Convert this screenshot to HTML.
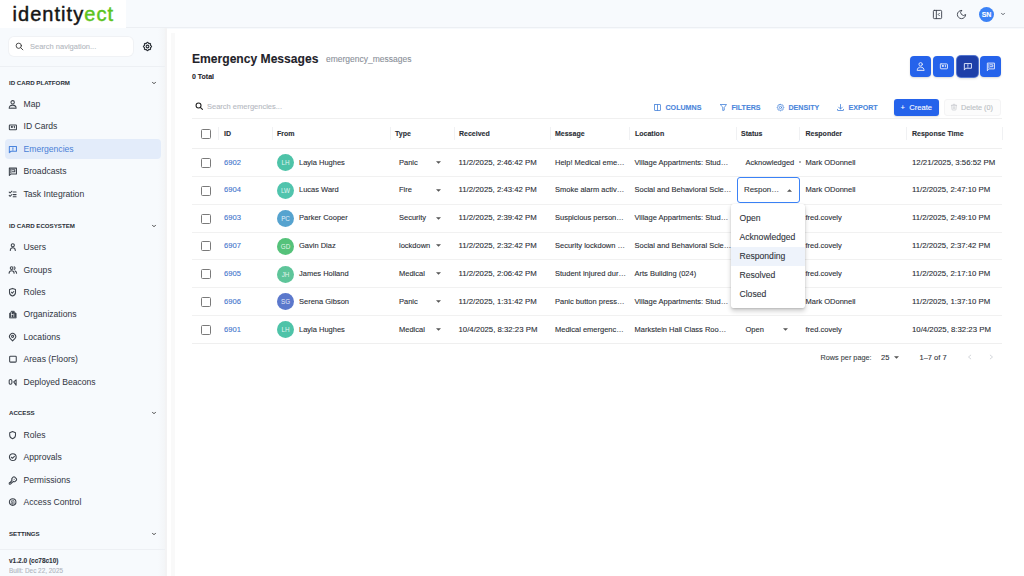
<!DOCTYPE html>
<html><head><meta charset="utf-8">
<style>
*{box-sizing:border-box;margin:0;padding:0}
html,body{width:1024px;height:576px;overflow:hidden;background:#f7fafd;font-family:"Liberation Sans",sans-serif;color:#2b2f36}
.abs{position:absolute;-webkit-text-stroke:0.1px currentColor}
svg{display:block}
#hdr{position:absolute;left:0;top:0;width:1024px;height:28px;background:#f7fafd;border-bottom:1px solid #eceff3}
#logo{position:absolute;left:0;top:0;width:126px;height:28px;background:#fff}
#side{position:absolute;left:0;top:28px;width:167px;height:548px;background:linear-gradient(90deg,#f7fafd 0,#f7fafd 158px,#f3f5f7 165px);border-right:2px solid #f3f3f4}
#main{position:absolute;left:167px;top:29px;width:857px;height:547px;background:#fff}
.nav{position:absolute;left:23.5px;font-size:8.6px;color:#3b414b;white-space:nowrap;line-height:10px}
.sec{position:absolute;left:9px;font-size:6.15px;font-weight:bold;color:#2a2f37;letter-spacing:0px;white-space:nowrap;line-height:8px}
</style></head><body>
<div id="hdr"></div>
<div id="logo"></div>
<div id="side"></div>
<div id="main"></div>
<div class="abs" style="left:171px;top:33px;width:4px;height:543px;background:#f9f9f9"></div>
<div class="abs" style="left:9px;top:37px;width:124px;height:19px;background:#fff;border-radius:5px;box-shadow:0 0 0 1px #f0f2f5"></div>
<div class="abs" style="left:14.5px;top:42px;width:9px;height:9px;color:#333"><svg width="9" height="9" viewBox="0 0 24 24" stroke="currentColor" fill="none" stroke-width="2.3" stroke-linecap="round" stroke-linejoin="round"><circle cx="10" cy="10" r="7"/><path d="M21 21l-6-6"/></svg></div>
<div class="abs" style="left:30px;top:42px;font-size:7.5px;color:#b3b8c0;line-height:9px;white-space:nowrap">Search navigation...</div>
<div class="abs" style="left:142px;top:41px;width:11px;height:11px;color:#2a2f36"><svg width="11" height="11" viewBox="0 0 24 24" stroke="currentColor" fill="none" stroke-width="2.4" stroke-linecap="round" stroke-linejoin="round"><path d="M10.325 4.317c.426 -1.756 2.924 -1.756 3.35 0a1.724 1.724 0 0 0 2.573 1.066c1.543 -.94 3.31 .826 2.37 2.37a1.724 1.724 0 0 0 1.065 2.572c1.756 .426 1.756 2.924 0 3.35a1.724 1.724 0 0 0 -1.066 2.573c.94 1.543 -.826 3.31 -2.37 2.37a1.724 1.724 0 0 0 -2.572 1.065c-.426 1.756 -2.924 1.756 -3.35 0a1.724 1.724 0 0 0 -2.573 -1.066c-1.543 .94 -3.31 -.826 -2.37 -2.37a1.724 1.724 0 0 0 -1.065 -2.572c-1.756 -.426 -1.756 -2.924 0 -3.35a1.724 1.724 0 0 0 1.066 -2.573c-.94 -1.543 .826 -3.31 2.37 -2.37c1 .608 2.296 .07 2.572 -1.065z"/><circle cx="12" cy="12" r="3"/></svg></div>
<div class="abs" style="left:0;top:66px;width:165px;height:1px;background:#edf0f4"></div>
<div class="sec" style="top:79px">ID CARD PLATFORM</div><div class="abs" style="left:151px;top:80.2px;width:6px;height:6px;color:#333"><svg width="6" height="6" viewBox="0 0 24 24" stroke="currentColor" fill="none" stroke-width="3.6" stroke-linecap="round" stroke-linejoin="round"><path d="M6 9l6 6 6-6"/></svg></div>
<div class="abs" style="left:8px;top:99.20px;width:10px;height:10px;color:#3d434c"><svg width="10" height="10" viewBox="0 0 10 10" stroke="currentColor" fill="none" stroke-width="1.05" stroke-linecap="round" stroke-linejoin="round"><circle cx="4.65" cy="3.3" r="1.7"/><path d="M1.2 9.2c0-2 1.5-3.1 3.45-3.1s3.45 1.1 3.45 3.1z"/><path d="M3 8.2h3.3" stroke-width="0.6" opacity="0.5"/></svg></div><div class="nav" style="top:99.10px;color:#30353d">Map</div>
<div class="abs" style="left:8px;top:121.55px;width:10px;height:10px;color:#3d434c"><svg width="10" height="10" viewBox="0 0 10 10" stroke="currentColor" fill="none" stroke-width="1.05" stroke-linecap="round" stroke-linejoin="round"><rect x="1.35" y="2.9" width="7.1" height="4.9" rx="0.6"/><rect x="2.9" y="4.05" width="1.9" height="1.8" fill="currentColor" stroke="none"/><path d="M6.4 4.2v1.6"/></svg></div><div class="nav" style="top:121.45px;color:#30353d">ID Cards</div>
<div class="abs" style="left:5px;top:139px;width:156px;height:20px;background:#e3ecfa;border-radius:4px"></div>
<div class="abs" style="left:8px;top:143.90px;width:10px;height:10px;color:#4a84dd"><svg width="10" height="10" viewBox="0 0 10 10" stroke="currentColor" fill="none" stroke-width="1.05" stroke-linecap="round" stroke-linejoin="round"><path d="M1.35 8.7V2.55h7.1v4.7H3z"/><path d="M4.9 3.7v1.5"/><path d="M4.9 6.2v.05"/></svg></div><div class="nav" style="top:143.80px;color:#4a7fd6">Emergencies</div>
<div class="abs" style="left:8px;top:166.25px;width:10px;height:10px;color:#3d434c"><svg width="10" height="10" viewBox="0 0 10 10" stroke="currentColor" fill="none" stroke-width="1.05" stroke-linecap="round" stroke-linejoin="round"><path d="M1.35 9.4V2.1h7.1v5.8H3z"/><path d="M2.9 3.3v3.4"/><path d="M4.4 3.8h2.4v1.9H4.4"/></svg></div><div class="nav" style="top:166.15px;color:#30353d">Broadcasts</div>
<div class="abs" style="left:8px;top:188.60px;width:10px;height:10px;color:#3d434c"><svg width="10" height="10" viewBox="0 0 10 10" stroke="currentColor" fill="none" stroke-width="1.05" stroke-linecap="round" stroke-linejoin="round"><path d="M1.2 3.1l.9.9 1.8-1.8M1.2 6.4l.9.9 1.8-1.8"/><path d="M5.2 2.9h2.9M5.2 5.6h2.9M5.2 7.8h2.9"/></svg></div><div class="nav" style="top:188.50px;color:#30353d">Task Integration</div>
<div class="sec" style="top:222px">ID CARD ECOSYSTEM</div><div class="abs" style="left:151px;top:223.2px;width:6px;height:6px;color:#333"><svg width="6" height="6" viewBox="0 0 24 24" stroke="currentColor" fill="none" stroke-width="3.6" stroke-linecap="round" stroke-linejoin="round"><path d="M6 9l6 6 6-6"/></svg></div>
<div class="abs" style="left:8px;top:242.20px;width:10px;height:10px;color:#3d434c"><svg width="10" height="10" viewBox="0 0 10 10" stroke="currentColor" fill="none" stroke-width="1.05" stroke-linecap="round" stroke-linejoin="round"><circle cx="4.8" cy="3.3" r="1.55"/><path d="M2.3 8.4c0-1.6 1.1-2.7 2.5-2.7s2.5 1.1 2.5 2.7"/></svg></div><div class="nav" style="top:242.10px;color:#30353d">Users</div>
<div class="abs" style="left:8px;top:264.60px;width:10px;height:10px;color:#3d434c"><svg width="10" height="10" viewBox="0 0 10 10" stroke="currentColor" fill="none" stroke-width="1.05" stroke-linecap="round" stroke-linejoin="round"><circle cx="3.6" cy="3.1" r="1.35"/><path d="M1.1 8.2c0-1.5 1-2.5 2.5-2.5s2.5 1 2.5 2.5"/><path d="M6.1 1.8a1.35 1.35 0 0 1 0 2.6M7.1 5.9c.9.3 1.5 1.1 1.5 2.3"/></svg></div><div class="nav" style="top:264.50px;color:#30353d">Groups</div>
<div class="abs" style="left:8px;top:287.00px;width:10px;height:10px;color:#3d434c"><svg width="10" height="10" viewBox="0 0 10 10" stroke="currentColor" fill="none" stroke-width="1.05" stroke-linecap="round" stroke-linejoin="round"><path d="M4.5 1.4l3 1.1v3c0 1.9-1.3 3-3 3.5-1.7-.5-3-1.6-3-3.5v-3z"/><path d="M3.4 5.2l.9.9 1.5-1.6"/></svg></div><div class="nav" style="top:286.90px;color:#30353d">Roles</div>
<div class="abs" style="left:8px;top:309.40px;width:10px;height:10px;color:#3d434c"><svg width="10" height="10" viewBox="0 0 10 10" stroke="currentColor" fill="none" stroke-width="1.05" stroke-linecap="round" stroke-linejoin="round"><path d="M1.5 8.7V4.2l1.6-.9V2.2h3.2v1.1l1.9 1v4.4z" fill="currentColor" stroke-width="0.6"/><path d="M3.4 3.6v4.3M3.4 5.5h1.5M5.8 5v2.5" stroke="#f6f9fc" stroke-width="0.7"/></svg></div><div class="nav" style="top:309.30px;color:#30353d">Organizations</div>
<div class="abs" style="left:8px;top:331.80px;width:10px;height:10px;color:#3d434c"><svg width="10" height="10" viewBox="0 0 10 10" stroke="currentColor" fill="none" stroke-width="1.05" stroke-linecap="round" stroke-linejoin="round"><circle cx="4.6" cy="4.3" r="1.05"/><path d="M4.6 8.9L2.4 6.6a3.05 3.05 0 1 1 4.4 0z"/></svg></div><div class="nav" style="top:331.70px;color:#30353d">Locations</div>
<div class="abs" style="left:8px;top:354.20px;width:10px;height:10px;color:#3d434c"><svg width="10" height="10" viewBox="0 0 10 10" stroke="currentColor" fill="none" stroke-width="1.05" stroke-linecap="round" stroke-linejoin="round"><rect x="1.65" y="2.2" width="6.6" height="5.9" rx="0.8"/></svg></div><div class="nav" style="top:354.10px;color:#30353d">Areas (Floors)</div>
<div class="abs" style="left:8px;top:376.60px;width:10px;height:10px;color:#3d434c"><svg width="10" height="10" viewBox="0 0 10 10" stroke="currentColor" fill="none" stroke-width="1.05" stroke-linecap="round" stroke-linejoin="round"><rect x="1.2" y="2.4" width="2.7" height="4.9" rx="1.3"/><path d="M5.7 4.9l2.4-2v5.4z"/></svg></div><div class="nav" style="top:376.50px;color:#30353d">Deployed Beacons</div>
<div class="sec" style="top:409px">ACCESS</div><div class="abs" style="left:151px;top:410.2px;width:6px;height:6px;color:#333"><svg width="6" height="6" viewBox="0 0 24 24" stroke="currentColor" fill="none" stroke-width="3.6" stroke-linecap="round" stroke-linejoin="round"><path d="M6 9l6 6 6-6"/></svg></div>
<div class="abs" style="left:8px;top:430.05px;width:10px;height:10px;color:#3d434c"><svg width="10" height="10" viewBox="0 0 10 10" stroke="currentColor" fill="none" stroke-width="1.05" stroke-linecap="round" stroke-linejoin="round"><path d="M4.6 1.5l2.9 1.2v2.6c0 1.8-1.2 2.9-2.9 3.4-1.7-.5-2.9-1.6-2.9-3.4V2.7z"/></svg></div><div class="nav" style="top:429.95px;color:#30353d">Roles</div>
<div class="abs" style="left:8px;top:452.40px;width:10px;height:10px;color:#3d434c"><svg width="10" height="10" viewBox="0 0 10 10" stroke="currentColor" fill="none" stroke-width="1.05" stroke-linecap="round" stroke-linejoin="round"><circle cx="4.8" cy="5.1" r="3.4"/><path d="M3.3 5.2l1.1 1.1 2-2"/></svg></div><div class="nav" style="top:452.30px;color:#30353d">Approvals</div>
<div class="abs" style="left:8px;top:474.75px;width:10px;height:10px;color:#3d434c"><svg width="10" height="10" viewBox="0 0 10 10" stroke="currentColor" fill="none" stroke-width="1.05" stroke-linecap="round" stroke-linejoin="round"><g transform="translate(0 0.6) scale(0.41)" stroke-width="2.6"><path d="M16.555 3.843l3.602 3.602a2.877 2.877 0 0 1 0 4.069l-2.643 2.643a2.877 2.877 0 0 1-4.069 0l-.301-.301l-6.558 6.558a2 2 0 0 1-1.239.578l-.175.008h-1.172a1 1 0 0 1-1-1v-1.172a2 2 0 0 1 .586-1.414l.414-.414h2v-2h2v-2l2.144-2.144l-.301-.301a2.877 2.877 0 0 1 0-4.069l2.643-2.643a2.877 2.877 0 0 1 4.069 0z"/><path d="M15 9h.01"/></g></svg></div><div class="nav" style="top:474.65px;color:#30353d">Permissions</div>
<div class="abs" style="left:8px;top:497.10px;width:10px;height:10px;color:#3d434c"><svg width="10" height="10" viewBox="0 0 10 10" stroke="currentColor" fill="none" stroke-width="1.05" stroke-linecap="round" stroke-linejoin="round"><circle cx="4.65" cy="5.05" r="3.3"/><path d="M3.3 4.6a1.35 1.35 0 0 1 2.7 0v2.1M3.3 5.6v1.2M4.65 4.7v2.6" stroke-width="0.75"/></svg></div><div class="nav" style="top:497.00px;color:#30353d">Access Control</div>
<div class="sec" style="top:530px">SETTINGS</div><div class="abs" style="left:151px;top:531.2px;width:6px;height:6px;color:#333"><svg width="6" height="6" viewBox="0 0 24 24" stroke="currentColor" fill="none" stroke-width="3.6" stroke-linecap="round" stroke-linejoin="round"><path d="M6 9l6 6 6-6"/></svg></div>
<div class="abs" style="left:0;top:549px;width:165px;height:1px;background:#edf0f4"></div>
<div class="abs" style="left:9px;top:557px;font-size:6.5px;font-weight:bold;color:#2f343c;white-space:nowrap;line-height:8px">v1.2.0 (cc78c10)</div>
<div class="abs" style="left:9px;top:567px;font-size:6.4px;color:#b0b5bd;white-space:nowrap;line-height:8px">Built: Dec 22, 2025</div>
<div class="abs" style="left:932px;top:9px;width:11px;height:11px;color:#3b414b"><svg width="11" height="11" viewBox="0 0 24 24" stroke="currentColor" fill="none" stroke-width="2" stroke-linecap="round" stroke-linejoin="round"><rect x="3" y="3" width="18" height="18" rx="2"/><path d="M9.5 3v18"/><path d="M16 9.5l-2.5 2.5 2.5 2.5"/></svg></div>
<div class="abs" style="left:955.5px;top:9px;width:11px;height:11px;color:#3b414b"><svg width="11" height="11" viewBox="0 0 24 24" stroke="currentColor" fill="none" stroke-width="2" stroke-linecap="round" stroke-linejoin="round"><path d="M12 3a6 6 0 0 0 9 9 9 9 0 1 1-9-9z"/></svg></div>
<div class="abs" style="left:979px;top:7px;width:15px;height:15px;border-radius:50%;background:#3b82f6;color:#fff;font-size:7px;font-weight:bold;text-align:center;line-height:15px;letter-spacing:-0.2px">SN</div>
<div class="abs" style="left:999.5px;top:10.5px;width:6px;height:6px;color:#3b414b"><svg width="6" height="6" viewBox="0 0 24 24" stroke="currentColor" fill="none" stroke-width="3.2" stroke-linecap="round" stroke-linejoin="round"><path d="M6 9l6 6 6-6"/></svg></div>
<div class="abs" style="left:12.5px;top:1.5px;font-size:20px;line-height:24px;letter-spacing:1.05px;white-space:nowrap;color:#151515;-webkit-text-stroke:0.45px currentColor"><span>identity</span><span style="color:#5cc41c">ect</span></div>
<div class="abs" style="left:192px;top:51px;font-size:12.1px;font-weight:bold;color:#1f232a;line-height:16px;white-space:nowrap">Emergency Messages</div>
<div class="abs" style="left:326px;top:53.7px;font-size:8.5px;color:#8a9099;line-height:10px;white-space:nowrap">emergency_messages</div>
<div class="abs" style="left:192px;top:72px;font-size:7px;font-weight:bold;color:#1f232a;line-height:9px;white-space:nowrap">0 Total</div>
<div class="abs" style="left:910px;top:55.5px;width:21px;height:21px;border-radius:4px;background:#2563eb;box-shadow:0 1px 2px rgba(0,0,0,.15);color:#dfe7fb;padding:5.5px 5.5px 5.5px 6px"><svg width="10" height="10" viewBox="0 0 10 10" stroke="currentColor" fill="none" stroke-width="0.95" stroke-linecap="round" stroke-linejoin="round"><circle cx="4.65" cy="3.3" r="1.7"/><path d="M1.2 9.2c0-2 1.5-3.1 3.45-3.1s3.45 1.1 3.45 3.1z"/><path d="M3 8.2h3.3" stroke-width="0.6" opacity="0.5"/></svg></div>
<div class="abs" style="left:933px;top:55.5px;width:21px;height:21px;border-radius:4px;background:#2563eb;box-shadow:0 1px 2px rgba(0,0,0,.15);color:#dfe7fb;padding:5.5px 5.5px 5.5px 6px"><svg width="10" height="10" viewBox="0 0 10 10" stroke="currentColor" fill="none" stroke-width="0.95" stroke-linecap="round" stroke-linejoin="round"><rect x="1.35" y="2.9" width="7.1" height="4.9" rx="0.6"/><rect x="2.9" y="4.05" width="1.9" height="1.8" fill="currentColor" stroke="none"/><path d="M6.4 4.2v1.6"/></svg></div>
<div class="abs" style="left:957px;top:55.5px;width:21px;height:21px;border-radius:4px;background:#1e3fa8;box-shadow:0 0 0 1px #5577d0,0 1px 3px rgba(0,0,0,.25);color:#dfe7fb;padding:5.5px 5.5px 5.5px 6px"><svg width="10" height="10" viewBox="0 0 10 10" stroke="currentColor" fill="none" stroke-width="0.95" stroke-linecap="round" stroke-linejoin="round"><path d="M1.35 8.7V2.55h7.1v4.7H3z"/><path d="M4.9 3.7v1.5"/><path d="M4.9 6.2v.05"/></svg></div>
<div class="abs" style="left:980px;top:55.5px;width:21px;height:21px;border-radius:4px;background:#2563eb;box-shadow:0 1px 2px rgba(0,0,0,.15);color:#dfe7fb;padding:5.5px 5.5px 5.5px 6px"><svg width="10" height="10" viewBox="0 0 10 10" stroke="currentColor" fill="none" stroke-width="0.95" stroke-linecap="round" stroke-linejoin="round"><path d="M1.35 9.4V2.1h7.1v5.8H3z"/><path d="M2.9 3.3v3.4"/><path d="M4.4 3.8h2.4v1.9H4.4"/></svg></div>
<div class="abs" style="left:195px;top:102px;width:8.5px;height:8.5px;color:#222"><svg width="8.5" height="8.5" viewBox="0 0 24 24" stroke="currentColor" fill="none" stroke-width="3" stroke-linecap="round" stroke-linejoin="round"><circle cx="10" cy="10" r="7"/><path d="M21 21l-6-6"/></svg></div>
<div class="abs" style="left:207px;top:101.6px;font-size:7.5px;color:#b5b9bf;line-height:9px;white-space:nowrap">Search emergencies...</div>
<div class="abs" style="left:192px;top:118px;width:810px;height:1px;background:#f0f0f0"></div>
<div class="abs" style="left:653px;top:103px;width:9px;height:9px;color:#4a86db"><svg width="9" height="9" viewBox="0 0 24 24" stroke="currentColor" fill="none" stroke-width="2.2" stroke-linecap="round" stroke-linejoin="round"><rect x="4" y="4" width="16" height="16" rx="1"/><path d="M12 4v16"/></svg></div>
<div class="abs" style="left:665.5px;top:104px;font-size:7.1px;font-weight:bold;color:#4a86db;line-height:9px;white-space:nowrap">COLUMNS</div>
<div class="abs" style="left:719px;top:103px;width:9px;height:9px;color:#4a86db"><svg width="9" height="9" viewBox="0 0 24 24" stroke="currentColor" fill="none" stroke-width="2.2" stroke-linecap="round" stroke-linejoin="round"><path d="M4 4h16l-6 8v7l-4 1v-8z"/></svg></div>
<div class="abs" style="left:731.5px;top:104px;font-size:7.1px;font-weight:bold;color:#4a86db;line-height:9px;white-space:nowrap">FILTERS</div>
<div class="abs" style="left:776px;top:103px;width:9px;height:9px;color:#4a86db"><svg width="9" height="9" viewBox="0 0 24 24" stroke="currentColor" fill="none" stroke-width="2.2" stroke-linecap="round" stroke-linejoin="round"><path d="M10.325 4.317c.426 -1.756 2.924 -1.756 3.35 0a1.724 1.724 0 0 0 2.573 1.066c1.543 -.94 3.31 .826 2.37 2.37a1.724 1.724 0 0 0 1.065 2.572c1.756 .426 1.756 2.924 0 3.35a1.724 1.724 0 0 0 -1.066 2.573c.94 1.543 -.826 3.31 -2.37 2.37a1.724 1.724 0 0 0 -2.572 1.065c-.426 1.756 -2.924 1.756 -3.35 0a1.724 1.724 0 0 0 -2.573 -1.066c-1.543 .94 -3.31 -.826 -2.37 -2.37a1.724 1.724 0 0 0 -1.065 -2.572c-1.756 -.426 -1.756 -2.924 0 -3.35a1.724 1.724 0 0 0 1.066 -2.573c-.94 -1.543 .826 -3.31 2.37 -2.37c1 .608 2.296 .07 2.572 -1.065z"/><circle cx="12" cy="12" r="3"/></svg></div>
<div class="abs" style="left:788.5px;top:104px;font-size:7.1px;font-weight:bold;color:#4a86db;line-height:9px;white-space:nowrap">DENSITY</div>
<div class="abs" style="left:836px;top:103px;width:9px;height:9px;color:#4a86db"><svg width="9" height="9" viewBox="0 0 24 24" stroke="currentColor" fill="none" stroke-width="2.2" stroke-linecap="round" stroke-linejoin="round"><path d="M4 17v2a1 1 0 0 0 1 1h14a1 1 0 0 0 1-1v-2"/><path d="M7 11l5 5 5-5"/><path d="M12 4v12"/></svg></div>
<div class="abs" style="left:848.5px;top:104px;font-size:7.1px;font-weight:bold;color:#4a86db;line-height:9px;white-space:nowrap">EXPORT</div>
<div class="abs" style="left:893.5px;top:99.3px;width:45.5px;height:16.7px;border-radius:3px;background:#2563eb;color:#fff;font-size:7.6px;line-height:17px;text-align:center;white-space:nowrap;box-shadow:0 1px 2px rgba(0,0,0,.12)">+&nbsp; Create</div>
<div class="abs" style="left:944px;top:99px;width:57px;height:17px;border-radius:3px;background:#fcfcfc;border:1px solid #f4f4f5;color:#b9bdc3;font-size:7.3px;line-height:15px;white-space:nowrap;padding-left:16px">Delete (0)</div>
<div class="abs" style="left:950px;top:103px;width:8px;height:8px;color:#c4c7cc"><svg width="8" height="8" viewBox="0 0 24 24" stroke="currentColor" fill="none" stroke-width="2" stroke-linecap="round" stroke-linejoin="round"><path d="M4 7h16M10 11v6M14 11v6M5 7l1 12a2 2 0 0 0 2 2h8a2 2 0 0 0 2-2l1-12M9 7V4h6v3"/></svg></div>
<div class="abs" style="left:200.5px;top:128.5px;width:10px;height:10px;border:1.5px solid #7a7a7a;border-radius:1.5px"></div>
<div class="abs" style="left:224px;top:129px;font-size:7px;font-weight:bold;color:#2a2e35;line-height:9px;white-space:nowrap">ID</div>
<div class="abs" style="left:277px;top:129px;font-size:7px;font-weight:bold;color:#2a2e35;line-height:9px;white-space:nowrap">From</div>
<div class="abs" style="left:395px;top:129px;font-size:7px;font-weight:bold;color:#2a2e35;line-height:9px;white-space:nowrap">Type</div>
<div class="abs" style="left:459px;top:129px;font-size:7px;font-weight:bold;color:#2a2e35;line-height:9px;white-space:nowrap">Received</div>
<div class="abs" style="left:555px;top:129px;font-size:7px;font-weight:bold;color:#2a2e35;line-height:9px;white-space:nowrap">Message</div>
<div class="abs" style="left:635px;top:129px;font-size:7px;font-weight:bold;color:#2a2e35;line-height:9px;white-space:nowrap">Location</div>
<div class="abs" style="left:741px;top:129px;font-size:7px;font-weight:bold;color:#2a2e35;line-height:9px;white-space:nowrap">Status</div>
<div class="abs" style="left:805.5px;top:129px;font-size:7px;font-weight:bold;color:#2a2e35;line-height:9px;white-space:nowrap">Responder</div>
<div class="abs" style="left:912px;top:129px;font-size:7px;font-weight:bold;color:#2a2e35;line-height:9px;white-space:nowrap">Response Time</div>
<div class="abs" style="left:218px;top:127px;width:1px;height:13px;background:#f0f1f3"></div>
<div class="abs" style="left:272px;top:127px;width:1px;height:13px;background:#f0f1f3"></div>
<div class="abs" style="left:389.5px;top:127px;width:1px;height:13px;background:#f0f1f3"></div>
<div class="abs" style="left:453.5px;top:127px;width:1px;height:13px;background:#f0f1f3"></div>
<div class="abs" style="left:549.5px;top:127px;width:1px;height:13px;background:#f0f1f3"></div>
<div class="abs" style="left:629px;top:127px;width:1px;height:13px;background:#f0f1f3"></div>
<div class="abs" style="left:736px;top:127px;width:1px;height:13px;background:#f0f1f3"></div>
<div class="abs" style="left:799px;top:127px;width:1px;height:13px;background:#f0f1f3"></div>
<div class="abs" style="left:906px;top:127px;width:1px;height:13px;background:#f0f1f3"></div>
<div class="abs" style="left:1002px;top:127px;width:1px;height:13px;background:#f0f1f3"></div>
<div class="abs" style="left:192px;top:147.7px;width:810px;height:1px;background:#efefef"></div>
<div class="abs" style="left:200.5px;top:157.75px;width:10px;height:10px;border:1.5px solid #7a7a7a;border-radius:1.5px"></div>
<div class="abs" style="left:224px;top:157.55px;font-size:7.6px;color:#3f74cc;line-height:10px;white-space:nowrap;">6902</div>
<div class="abs" style="left:277px;top:153.95px;width:17px;height:17px;border-radius:50%;background:#4ec3a8;color:rgba(255,255,255,.85);font-size:6.3px;text-align:center;line-height:18px;-webkit-text-stroke:0">LH</div>
<div class="abs" style="left:299px;top:157.55px;font-size:7.5px;color:#2a2e35;line-height:10px;white-space:nowrap;">Layla Hughes</div>
<div class="abs" style="left:399px;top:157.55px;font-size:7.5px;color:#2a2e35;line-height:10px;white-space:nowrap;">Panic</div>
<div class="abs" style="left:436px;top:160.75px"><svg width="5" height="3" viewBox="0 0 10 5"><path d="M0 0h10L5 5z" fill="#555"/></svg></div>
<div class="abs" style="left:458.5px;top:157.55px;font-size:7.8px;color:#2a2e35;line-height:10px;white-space:nowrap;">11/2/2025, 2:46:42 PM</div>
<div class="abs" style="left:555px;top:157.55px;font-size:7.5px;color:#2a2e35;line-height:10px;white-space:nowrap;">Help! Medical eme…</div>
<div class="abs" style="left:634.5px;top:157.55px;font-size:7.5px;color:#2a2e35;line-height:10px;white-space:nowrap;">Village Appartments: Stud…</div>
<div class="abs" style="left:745.5px;top:157.55px;font-size:7.5px;color:#2a2e35;line-height:10px;white-space:nowrap;">Acknowledged</div>
<div class="abs" style="left:805.5px;top:157.55px;font-size:7.5px;color:#2a2e35;line-height:10px;white-space:nowrap;">Mark ODonnell</div>
<div class="abs" style="left:912px;top:157.55px;font-size:7.8px;color:#2a2e35;line-height:10px;white-space:nowrap;">12/21/2025, 3:56:52 PM</div>
<div class="abs" style="left:192px;top:175.70px;width:810px;height:1px;background:#f1f1f1"></div>
<div class="abs" style="left:200.5px;top:185.65px;width:10px;height:10px;border:1.5px solid #7a7a7a;border-radius:1.5px"></div>
<div class="abs" style="left:224px;top:185.45px;font-size:7.6px;color:#3f74cc;line-height:10px;white-space:nowrap;">6904</div>
<div class="abs" style="left:277px;top:181.85px;width:17px;height:17px;border-radius:50%;background:#50c4ad;color:rgba(255,255,255,.85);font-size:6.3px;text-align:center;line-height:18px;-webkit-text-stroke:0">LW</div>
<div class="abs" style="left:299px;top:185.45px;font-size:7.5px;color:#2a2e35;line-height:10px;white-space:nowrap;">Lucas Ward</div>
<div class="abs" style="left:399px;top:185.45px;font-size:7.5px;color:#2a2e35;line-height:10px;white-space:nowrap;">Fire</div>
<div class="abs" style="left:436px;top:188.65px"><svg width="5" height="3" viewBox="0 0 10 5"><path d="M0 0h10L5 5z" fill="#555"/></svg></div>
<div class="abs" style="left:458.5px;top:185.45px;font-size:7.8px;color:#2a2e35;line-height:10px;white-space:nowrap;">11/2/2025, 2:43:42 PM</div>
<div class="abs" style="left:555px;top:185.45px;font-size:7.5px;color:#2a2e35;line-height:10px;white-space:nowrap;">Smoke alarm activ…</div>
<div class="abs" style="left:634.5px;top:185.45px;font-size:7.5px;color:#2a2e35;line-height:10px;white-space:nowrap;">Social and Behavioral Scie…</div>
<div class="abs" style="left:805.5px;top:185.45px;font-size:7.5px;color:#2a2e35;line-height:10px;white-space:nowrap;">Mark ODonnell</div>
<div class="abs" style="left:912px;top:185.45px;font-size:7.8px;color:#2a2e35;line-height:10px;white-space:nowrap;">11/2/2025, 2:47:10 PM</div>
<div class="abs" style="left:192px;top:203.60px;width:810px;height:1px;background:#f1f1f1"></div>
<div class="abs" style="left:200.5px;top:213.55px;width:10px;height:10px;border:1.5px solid #7a7a7a;border-radius:1.5px"></div>
<div class="abs" style="left:224px;top:213.35px;font-size:7.6px;color:#3f74cc;line-height:10px;white-space:nowrap;">6903</div>
<div class="abs" style="left:277px;top:209.75px;width:17px;height:17px;border-radius:50%;background:#56a3cf;color:rgba(255,255,255,.85);font-size:6.3px;text-align:center;line-height:18px;-webkit-text-stroke:0">PC</div>
<div class="abs" style="left:299px;top:213.35px;font-size:7.5px;color:#2a2e35;line-height:10px;white-space:nowrap;">Parker Cooper</div>
<div class="abs" style="left:399px;top:213.35px;font-size:7.5px;color:#2a2e35;line-height:10px;white-space:nowrap;">Security</div>
<div class="abs" style="left:436px;top:216.55px"><svg width="5" height="3" viewBox="0 0 10 5"><path d="M0 0h10L5 5z" fill="#555"/></svg></div>
<div class="abs" style="left:458.5px;top:213.35px;font-size:7.8px;color:#2a2e35;line-height:10px;white-space:nowrap;">11/2/2025, 2:39:42 PM</div>
<div class="abs" style="left:555px;top:213.35px;font-size:7.5px;color:#2a2e35;line-height:10px;white-space:nowrap;">Suspicious person…</div>
<div class="abs" style="left:634.5px;top:213.35px;font-size:7.5px;color:#2a2e35;line-height:10px;white-space:nowrap;">Village Appartments: Stud…</div>
<div class="abs" style="left:805.5px;top:213.35px;font-size:7.5px;color:#2a2e35;line-height:10px;white-space:nowrap;">fred.covely</div>
<div class="abs" style="left:912px;top:213.35px;font-size:7.8px;color:#2a2e35;line-height:10px;white-space:nowrap;">11/2/2025, 2:49:10 PM</div>
<div class="abs" style="left:192px;top:231.50px;width:810px;height:1px;background:#f1f1f1"></div>
<div class="abs" style="left:200.5px;top:241.45px;width:10px;height:10px;border:1.5px solid #7a7a7a;border-radius:1.5px"></div>
<div class="abs" style="left:224px;top:241.25px;font-size:7.6px;color:#3f74cc;line-height:10px;white-space:nowrap;">6907</div>
<div class="abs" style="left:277px;top:237.65px;width:17px;height:17px;border-radius:50%;background:#55c27a;color:rgba(255,255,255,.85);font-size:6.3px;text-align:center;line-height:18px;-webkit-text-stroke:0">GD</div>
<div class="abs" style="left:299px;top:241.25px;font-size:7.5px;color:#2a2e35;line-height:10px;white-space:nowrap;">Gavin Diaz</div>
<div class="abs" style="left:399px;top:241.25px;font-size:7.5px;color:#2a2e35;line-height:10px;white-space:nowrap;">lockdown</div>
<div class="abs" style="left:436px;top:244.45px"><svg width="5" height="3" viewBox="0 0 10 5"><path d="M0 0h10L5 5z" fill="#555"/></svg></div>
<div class="abs" style="left:458.5px;top:241.25px;font-size:7.8px;color:#2a2e35;line-height:10px;white-space:nowrap;">11/2/2025, 2:32:42 PM</div>
<div class="abs" style="left:555px;top:241.25px;font-size:7.5px;color:#2a2e35;line-height:10px;white-space:nowrap;">Security lockdown …</div>
<div class="abs" style="left:634.5px;top:241.25px;font-size:7.5px;color:#2a2e35;line-height:10px;white-space:nowrap;">Social and Behavioral Scie…</div>
<div class="abs" style="left:805.5px;top:241.25px;font-size:7.5px;color:#2a2e35;line-height:10px;white-space:nowrap;">fred.covely</div>
<div class="abs" style="left:912px;top:241.25px;font-size:7.8px;color:#2a2e35;line-height:10px;white-space:nowrap;">11/2/2025, 2:37:42 PM</div>
<div class="abs" style="left:192px;top:259.40px;width:810px;height:1px;background:#f1f1f1"></div>
<div class="abs" style="left:200.5px;top:269.34999999999997px;width:10px;height:10px;border:1.5px solid #7a7a7a;border-radius:1.5px"></div>
<div class="abs" style="left:224px;top:269.15px;font-size:7.6px;color:#3f74cc;line-height:10px;white-space:nowrap;">6905</div>
<div class="abs" style="left:277px;top:265.55px;width:17px;height:17px;border-radius:50%;background:#5ec59a;color:rgba(255,255,255,.85);font-size:6.3px;text-align:center;line-height:18px;-webkit-text-stroke:0">JH</div>
<div class="abs" style="left:299px;top:269.15px;font-size:7.5px;color:#2a2e35;line-height:10px;white-space:nowrap;">James Holland</div>
<div class="abs" style="left:399px;top:269.15px;font-size:7.5px;color:#2a2e35;line-height:10px;white-space:nowrap;">Medical</div>
<div class="abs" style="left:436px;top:272.35px"><svg width="5" height="3" viewBox="0 0 10 5"><path d="M0 0h10L5 5z" fill="#555"/></svg></div>
<div class="abs" style="left:458.5px;top:269.15px;font-size:7.8px;color:#2a2e35;line-height:10px;white-space:nowrap;">11/2/2025, 2:06:42 PM</div>
<div class="abs" style="left:555px;top:269.15px;font-size:7.5px;color:#2a2e35;line-height:10px;white-space:nowrap;">Student injured dur…</div>
<div class="abs" style="left:634.5px;top:269.15px;font-size:7.5px;color:#2a2e35;line-height:10px;white-space:nowrap;">Arts Building (024)</div>
<div class="abs" style="left:805.5px;top:269.15px;font-size:7.5px;color:#2a2e35;line-height:10px;white-space:nowrap;">fred.covely</div>
<div class="abs" style="left:912px;top:269.15px;font-size:7.8px;color:#2a2e35;line-height:10px;white-space:nowrap;">11/2/2025, 2:17:10 PM</div>
<div class="abs" style="left:192px;top:287.30px;width:810px;height:1px;background:#f1f1f1"></div>
<div class="abs" style="left:200.5px;top:297.25px;width:10px;height:10px;border:1.5px solid #7a7a7a;border-radius:1.5px"></div>
<div class="abs" style="left:224px;top:297.05px;font-size:7.6px;color:#3f74cc;line-height:10px;white-space:nowrap;">6906</div>
<div class="abs" style="left:277px;top:293.45px;width:17px;height:17px;border-radius:50%;background:#5b78cc;color:rgba(255,255,255,.85);font-size:6.3px;text-align:center;line-height:18px;-webkit-text-stroke:0">SG</div>
<div class="abs" style="left:299px;top:297.05px;font-size:7.5px;color:#2a2e35;line-height:10px;white-space:nowrap;">Serena Gibson</div>
<div class="abs" style="left:399px;top:297.05px;font-size:7.5px;color:#2a2e35;line-height:10px;white-space:nowrap;">Panic</div>
<div class="abs" style="left:436px;top:300.25px"><svg width="5" height="3" viewBox="0 0 10 5"><path d="M0 0h10L5 5z" fill="#555"/></svg></div>
<div class="abs" style="left:458.5px;top:297.05px;font-size:7.8px;color:#2a2e35;line-height:10px;white-space:nowrap;">11/2/2025, 1:31:42 PM</div>
<div class="abs" style="left:555px;top:297.05px;font-size:7.5px;color:#2a2e35;line-height:10px;white-space:nowrap;">Panic button press…</div>
<div class="abs" style="left:634.5px;top:297.05px;font-size:7.5px;color:#2a2e35;line-height:10px;white-space:nowrap;">Village Appartments: Stud…</div>
<div class="abs" style="left:805.5px;top:297.05px;font-size:7.5px;color:#2a2e35;line-height:10px;white-space:nowrap;">Mark ODonnell</div>
<div class="abs" style="left:912px;top:297.05px;font-size:7.8px;color:#2a2e35;line-height:10px;white-space:nowrap;">11/2/2025, 1:37:10 PM</div>
<div class="abs" style="left:192px;top:315.20px;width:810px;height:1px;background:#f1f1f1"></div>
<div class="abs" style="left:200.5px;top:325.15px;width:10px;height:10px;border:1.5px solid #7a7a7a;border-radius:1.5px"></div>
<div class="abs" style="left:224px;top:324.95px;font-size:7.6px;color:#3f74cc;line-height:10px;white-space:nowrap;">6901</div>
<div class="abs" style="left:277px;top:321.35px;width:17px;height:17px;border-radius:50%;background:#4ec3a8;color:rgba(255,255,255,.85);font-size:6.3px;text-align:center;line-height:18px;-webkit-text-stroke:0">LH</div>
<div class="abs" style="left:299px;top:324.95px;font-size:7.5px;color:#2a2e35;line-height:10px;white-space:nowrap;">Layla Hughes</div>
<div class="abs" style="left:399px;top:324.95px;font-size:7.5px;color:#2a2e35;line-height:10px;white-space:nowrap;">Medical</div>
<div class="abs" style="left:436px;top:328.15px"><svg width="5" height="3" viewBox="0 0 10 5"><path d="M0 0h10L5 5z" fill="#555"/></svg></div>
<div class="abs" style="left:458.5px;top:324.95px;font-size:7.8px;color:#2a2e35;line-height:10px;white-space:nowrap;">10/4/2025, 8:32:23 PM</div>
<div class="abs" style="left:555px;top:324.95px;font-size:7.5px;color:#2a2e35;line-height:10px;white-space:nowrap;">Medical emergenc…</div>
<div class="abs" style="left:634.5px;top:324.95px;font-size:7.5px;color:#2a2e35;line-height:10px;white-space:nowrap;">Markstein Hall Class Roo…</div>
<div class="abs" style="left:745.5px;top:324.95px;font-size:7.5px;color:#2a2e35;line-height:10px;white-space:nowrap;">Open</div>
<div class="abs" style="left:805.5px;top:324.95px;font-size:7.5px;color:#2a2e35;line-height:10px;white-space:nowrap;">fred.covely</div>
<div class="abs" style="left:912px;top:324.95px;font-size:7.8px;color:#2a2e35;line-height:10px;white-space:nowrap;">10/4/2025, 8:32:23 PM</div>
<div class="abs" style="left:192px;top:343.10px;width:810px;height:1px;background:#efefef"></div>
<div class="abs" style="left:798.5px;top:161px;width:2px;height:2px;border-radius:50%;background:#999"></div>
<div class="abs" style="left:782.5px;top:328.15px"><svg width="5" height="3" viewBox="0 0 10 5"><path d="M0 0h10L5 5z" fill="#555"/></svg></div>
<div class="abs" style="left:737px;top:177px;width:62.5px;height:26px;border:1.5px solid #3b82f6;border-radius:3px;background:#fff"></div>
<div class="abs" style="left:744px;top:184.5px;font-size:7.9px;color:#2f333a;line-height:10px;white-space:nowrap">Respon…</div>
<div class="abs" style="left:786.5px;top:188.5px"><svg width="5" height="3" viewBox="0 0 10 5"><path d="M0 5h10L5 0z" fill="#555"/></svg></div>
<div class="abs" style="left:731px;top:204px;width:74px;height:103.5px;background:#fff;border-radius:2px;box-shadow:0 3px 5px rgba(0,0,0,.2),0 1px 2px rgba(0,0,0,.1),0 0 1px rgba(0,0,0,.12)"></div>
<div class="abs" style="left:731px;top:246.5px;width:74px;height:19px;background:#eef3fb"></div>
<div class="abs" style="left:739.5px;top:212.5px;font-size:8.6px;color:#30343b;line-height:11px;white-space:nowrap">Open</div>
<div class="abs" style="left:739.5px;top:231.7px;font-size:8.6px;color:#30343b;line-height:11px;white-space:nowrap">Acknowledged</div>
<div class="abs" style="left:739.5px;top:250.8px;font-size:8.6px;color:#30343b;line-height:11px;white-space:nowrap">Responding</div>
<div class="abs" style="left:739.5px;top:270.1px;font-size:8.6px;color:#30343b;line-height:11px;white-space:nowrap">Resolved</div>
<div class="abs" style="left:739.5px;top:289px;font-size:8.6px;color:#30343b;line-height:11px;white-space:nowrap">Closed</div>
<div class="abs" style="left:820.5px;top:352.5px;font-size:7.3px;color:#3b3f46;line-height:9px;white-space:nowrap">Rows per page:</div>
<div class="abs" style="left:881px;top:352.5px;font-size:7.5px;color:#2f333a;line-height:9px;white-space:nowrap">25</div>
<div class="abs" style="left:893.5px;top:355.5px"><svg width="5" height="3" viewBox="0 0 10 5"><path d="M0 0h10L5 5z" fill="#555"/></svg></div>
<div class="abs" style="left:919.5px;top:352.5px;font-size:7.5px;color:#2f333a;line-height:9px;white-space:nowrap">1–7 of 7</div>
<div class="abs" style="left:966.5px;top:353.5px;width:6px;height:8px;color:#bfc3c9"><svg width="6" height="6" viewBox="0 0 16 16" stroke="currentColor" fill="none" stroke-width="1.8" stroke-linecap="round" stroke-linejoin="round"><path d="M10 3L4 8l6 5"/></svg></div>
<div class="abs" style="left:988px;top:353.5px;width:6px;height:8px;color:#bfc3c9"><svg width="6" height="6" viewBox="0 0 16 16" stroke="currentColor" fill="none" stroke-width="1.8" stroke-linecap="round" stroke-linejoin="round"><path d="M6 3l6 5-6 5"/></svg></div>
</body></html>
